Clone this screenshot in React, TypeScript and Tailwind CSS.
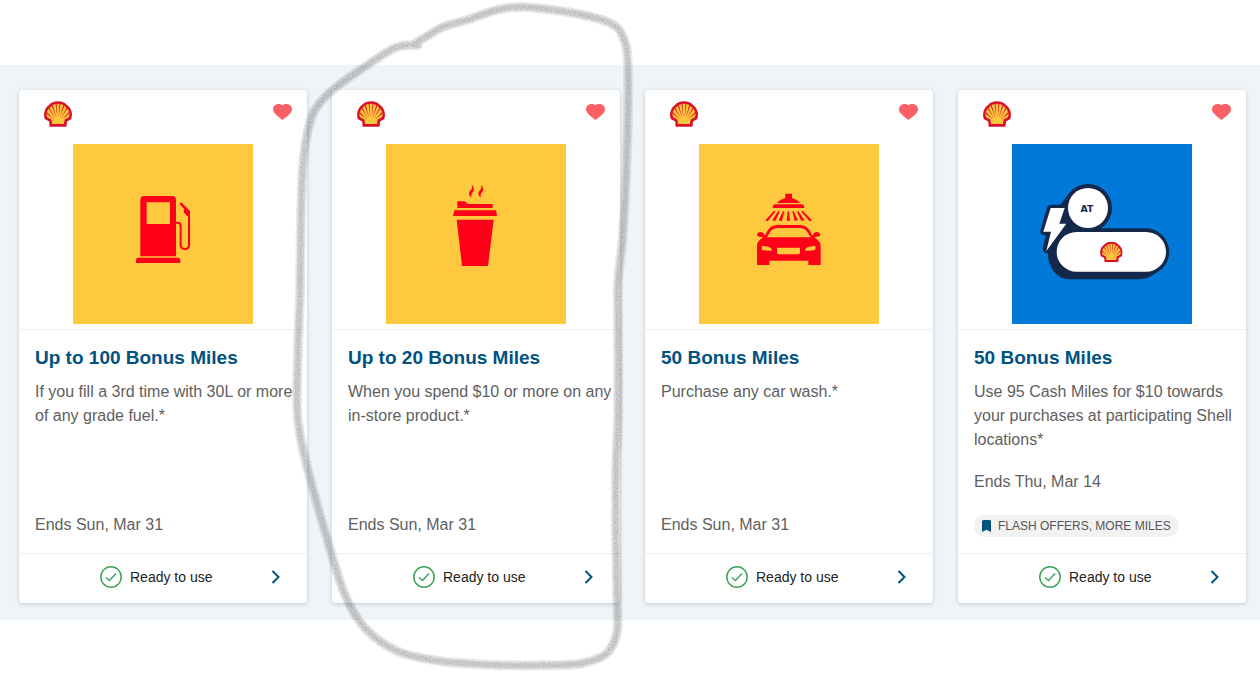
import type { ReactNode } from "react";

const RED = "#ff0019";

const ShellLogo = ({ className }: { className?: string }) => (
  <svg viewBox="0 0 80 73" className={className} role="img" aria-label="Shell">
    <path
      d="M40 0C52 0 60 4 65 10C75 17 80 28 80 39L78 51L66 58L64 73H16L15 58L2 51L0 39C0 28 5 17 15 10C20 4 28 0 40 0Z"
      fill="#d8102a"
    />
    <path
      d="M40 7C49 7 55 10 60 15C67 20 73 29 73 38L71 46L59 52L57 65H23L21 52L9 46L7 38C7 29 13 20 20 15C25 10 31 7 40 7Z"
      fill="#fdc53c"
    />
    <path
      d="M38 46L36 7H33ZM42 46L44 7H47ZM35 47L25 11L22 13ZM45 47L55 11L58 13ZM32 49L15 18L13 21ZM48 49L65 18L67 21ZM29 52L8 31L7 35ZM51 52L72 31L73 35Z"
      fill="#d8102a"
    />
  </svg>
);

const HeartIcon = () => (
  <svg viewBox="0 0 57 48" className="w-[19px] h-4">
    <path d="M28 48C22 43 12 36 5 28C-1 21 -2 11 4 5C11 -2 23 -1 28 4C34 -1 46 -2 53 5C59 11 58 21 52 28C45 36 35 43 28 48Z" fill="#fb6065" />
  </svg>
);

const CheckIcon = () => (
  <svg viewBox="0 0 22 22" className="w-[22px] h-[22px]" fill="none" stroke="#3fa45b" strokeWidth="1.5">
    <circle cx="11" cy="11" r="10.2" />
    <path d="M6 11.5L9.5 14.5L16 7.5" />
  </svg>
);

const ChevronIcon = () => (
  <svg viewBox="0 0 10 14" className="w-[10px] h-[14px] ml-auto" fill="none" stroke="#00527f" strokeWidth="2">
    <path d="M1.5 1L7.5 7L1.5 13" />
  </svg>
);

const BookmarkIcon = () => (
  <svg viewBox="0 0 9 12" className="w-[9px] h-3">
    <path d="M0 1.5Q0 0 1.5 0H7.5Q9 0 9 1.5V12L4.5 9.8L0 12Z" fill="#00527f" />
  </svg>
);

const FuelArt = () => (
  <svg viewBox="0 0 180 180" className="size-[180px] bg-[#fec93e]">
    <g transform="translate(37 36) scale(0.3333)" fill={RED}>
      <path fillRule="evenodd" d="M102 48H186Q198 48 198 60V229H91V60Q91 48 102 48ZM110 67V132H180V67Z" />
      <path d="M84 233H205Q211 234 211 241V249H78V241Q78 234 84 233Z" />
      <path d="M198 128H205Q212 129 212 138V194Q212 207 225 207Q237 207 237 194V96L211 70" fill="none" stroke={RED} strokeWidth="6" />
      <path d="M213 67L240 93V112L231 108L221 97L222 86L210 73Z" />
    </g>
  </svg>
);

const CoffeeArt = () => (
  <svg viewBox="0 0 180 180" className="size-[180px] bg-[#fec93e]">
    <g transform="translate(44 26) scale(0.3333)" fill={RED}>
      <path d="M82 94H104L114 102H188V114H82Z" />
      <path d="M73 121H198L201 138H69Z" />
      <path d="M80 149H191L174 288H96Z" />
      <path d="M125 44Q135 54 130 64Q122 72 124 83Q113 74 119 64Q129 56 125 44ZM153 44Q163 54 158 64Q150 72 152 83Q141 74 147 64Q157 56 153 44Z" />
    </g>
  </svg>
);

const CarWashArt = () => (
  <svg viewBox="0 0 180 180" className="size-[180px] bg-[#fec93e]">
    <g transform="translate(41 36) scale(0.3333)" fill={RED}>
      <path d="M136 41H156V54Q171 58 181 69H110Q120 58 136 54Z" />
      <path d="M104 73H187Q193 75 193 84H98Q98 75 104 73Z" />
      <path d="M102 92L106 95L83 124L76 121ZM115 93L119 95L106 123L97 120ZM129 94H133L126 123L116 121ZM143 94H147L150 122H140ZM157 94H161L174 121L164 123ZM171 95L175 93L193 120L184 123ZM184 95L188 92L216 121L209 124Z" />
      <path
        fillRule="evenodd"
        d="M51 165Q52 156 62 156Q71 157 75 167L82 153Q91 137 108 135H183Q201 137 210 153L217 167Q221 157 231 156Q240 157 241 166Q239 171 223 171L233 180Q242 187 242 198V255H205V242H88V255H51V198Q51 187 59 180L70 171Q52 171 51 165ZM81 172H212L200 153Q194 145 182 144H111Q98 145 92 153ZM66 197Q64 204 66 210Q81 213 96 212Q95 203 88 201ZM225 197L204 201Q196 203 195 212Q211 213 225 210Q228 204 225 197ZM111 203V219Q112 223 118 223H173Q179 223 180 219V203Z"
      />
    </g>
  </svg>
);

const CashMilesArt = () => (
  <svg viewBox="0 0 540 540" className="size-[180px] bg-[#0079d9]">
    <g fill="#14284b">
      <circle cx="228" cy="192" r="72" />
      <path d="M165 156L145 182H119Q107 182 104 194L85 261Q84 274 102 274L92 313Q93 328 108 329A64 76 0 0 0 170 406H378Q400 406 418 396L450 375A71 71 0 0 0 403 253H265Z" />
    </g>
    <circle cx="228" cy="192" r="60" fill="#fff" />
    <rect x="134" y="264" width="328" height="119" rx="59.5" fill="#fff" />
    <path d="M116 192H158L142 239H163L103 321L117 263H94Z" fill="#fff" />
    <text x="225" y="204" textAnchor="middle" fill="#14284b" fontSize="28" fontWeight="700" fontFamily="DejaVu Sans, sans-serif">
      AT
    </text>
    <svg x="264" y="293" width="68" height="62" viewBox="0 0 80 73">
      <ShellLogo />
    </svg>
  </svg>
);

interface Offer {
  title: string;
  description: string;
  ends: string;
  art: ReactNode;
  tag?: string;
}

const offers: Offer[] = [
  {
    title: "Up to 100 Bonus Miles",
    description: "If you fill a 3rd time with 30L or more of any grade fuel.*",
    ends: "Ends Sun, Mar 31",
    art: <FuelArt />,
  },
  {
    title: "Up to 20 Bonus Miles",
    description: "When you spend $10 or more on any in-store product.*",
    ends: "Ends Sun, Mar 31",
    art: <CoffeeArt />,
  },
  {
    title: "50 Bonus Miles",
    description: "Purchase any car wash.*",
    ends: "Ends Sun, Mar 31",
    art: <CarWashArt />,
  },
  {
    title: "50 Bonus Miles",
    description: "Use 95 Cash Miles for $10 towards your purchases at participating Shell locations*",
    ends: "Ends Thu, Mar 14",
    art: <CashMilesArt />,
    tag: "FLASH OFFERS, MORE MILES",
  },
];

const OfferCard = ({ title, description, ends, art, tag }: Offer) => (
  <article className="flex flex-col bg-white rounded shadow-[0_1px_4px_rgba(0,0,0,0.18)]">
    <div className="flex items-start justify-between h-[54px] pl-[25px] pr-[15px] pt-[11px]">
      <ShellLogo className="w-7 h-[26px]" />
      <button type="button" aria-label="Remove from favourites" className="pt-[3px]">
        <HeartIcon />
      </button>
    </div>
    <div className="flex justify-center pb-[5px] border-b border-[#ecf0f2]">{art}</div>
    <div className="flex flex-col flex-1 py-4 pl-4 pr-2">
      <h2 className="text-[19px] leading-6 font-bold text-[#00527f]">{title}</h2>
      <p className="mt-[10px] text-base leading-6 text-[#606060]">{description}</p>
      <p className="mt-auto pt-[18px] text-base leading-6 text-[#606060]">{ends}</p>
      {tag && (
        <span className="flex items-center self-start gap-[7px] h-[22px] mt-[21px] px-2 rounded-full bg-[#f2f2f2] text-xs text-[#555555]">
          <BookmarkIcon />
          {tag}
        </span>
      )}
    </div>
    <button type="button" className="flex items-center h-[50px] pb-[3px] pl-[81px] pr-[26px] border-t border-[#ecf0f2] text-sm text-[#222222]">
      <CheckIcon />
      <span className="ml-2">Ready to use</span>
      <ChevronIcon />
    </button>
  </article>
);

const outline = [
  [418, 45], [397, 47], [372, 62], [335, 88], [316, 108], [308, 130], [303, 165], [301, 220], [300, 290],
  [298, 350], [297, 405], [300, 435], [310, 478], [328, 542], [345, 595], [365, 628], [397, 651], [440, 661],
  [497, 665], [557, 665], [583, 663], [606, 654], [617, 632], [617, 595], [616, 535], [616, 468], [618, 418],
  [618, 335], [618, 283], [623, 233], [627, 150], [628, 67], [623, 37], [610, 23], [573, 13], [523, 7],
  [497, 10], [467, 20], [443, 27], [424, 38], [412, 45],
];

// Catmull-Rom through the points, written out as cubic segments
const smoothPath = (points: number[][]) =>
  points.slice(1).reduce((path, end, i) => {
    const start = points[i];
    const before = points[i - 1] ?? start;
    const after = points[i + 2] ?? end;
    const c1 = [start[0] + (end[0] - before[0]) / 6, start[1] + (end[1] - before[1]) / 6];
    const c2 = [end[0] - (after[0] - start[0]) / 6, end[1] - (after[1] - start[1]) / 6];
    return `${path}C${c1} ${c2} ${end}`;
  }, `M${points[0]}`);

const PencilMark = () => {
  const d = smoothPath(outline);
  return (
    <svg viewBox="0 0 1260 673" className="absolute inset-x-0 top-0 w-full pointer-events-none" aria-hidden="true">
      <filter id="pencil" filterUnits="userSpaceOnUse" x="280" y="0" width="360" height="673">
        <feTurbulence type="fractalNoise" baseFrequency="0.8" numOctaves="2" seed="4" />
        <feColorMatrix values="0 0 0 0 0  0 0 0 0 0  0 0 0 0 0  1 0 0 0 0.25" result="grain" />
        <feComposite in="SourceGraphic" in2="grain" operator="in" />
      </filter>
      <g filter="url(#pencil)" fill="none" stroke="#6e6e6e" strokeLinecap="round" strokeLinejoin="round">
        <path d={d} strokeWidth="10" strokeOpacity="0.2" />
        <path d={d} strokeWidth="7" strokeOpacity="0.25" />
        <path d={d} strokeWidth="4" strokeOpacity="0.2" />
      </g>
    </svg>
  );
};

const App = () => (
  <main className="relative pt-[65px] pb-[53px] bg-white font-['Liberation_Sans',Arial,sans-serif]">
    <section className="grid grid-cols-4 gap-[25px] pt-[25px] pb-[17px] pl-[19px] pr-[14px] bg-[#eef4f7]">
      {offers.map((offer, index) => (
        <OfferCard key={index} {...offer} />
      ))}
    </section>
    <PencilMark />
  </main>
);

export default App;
